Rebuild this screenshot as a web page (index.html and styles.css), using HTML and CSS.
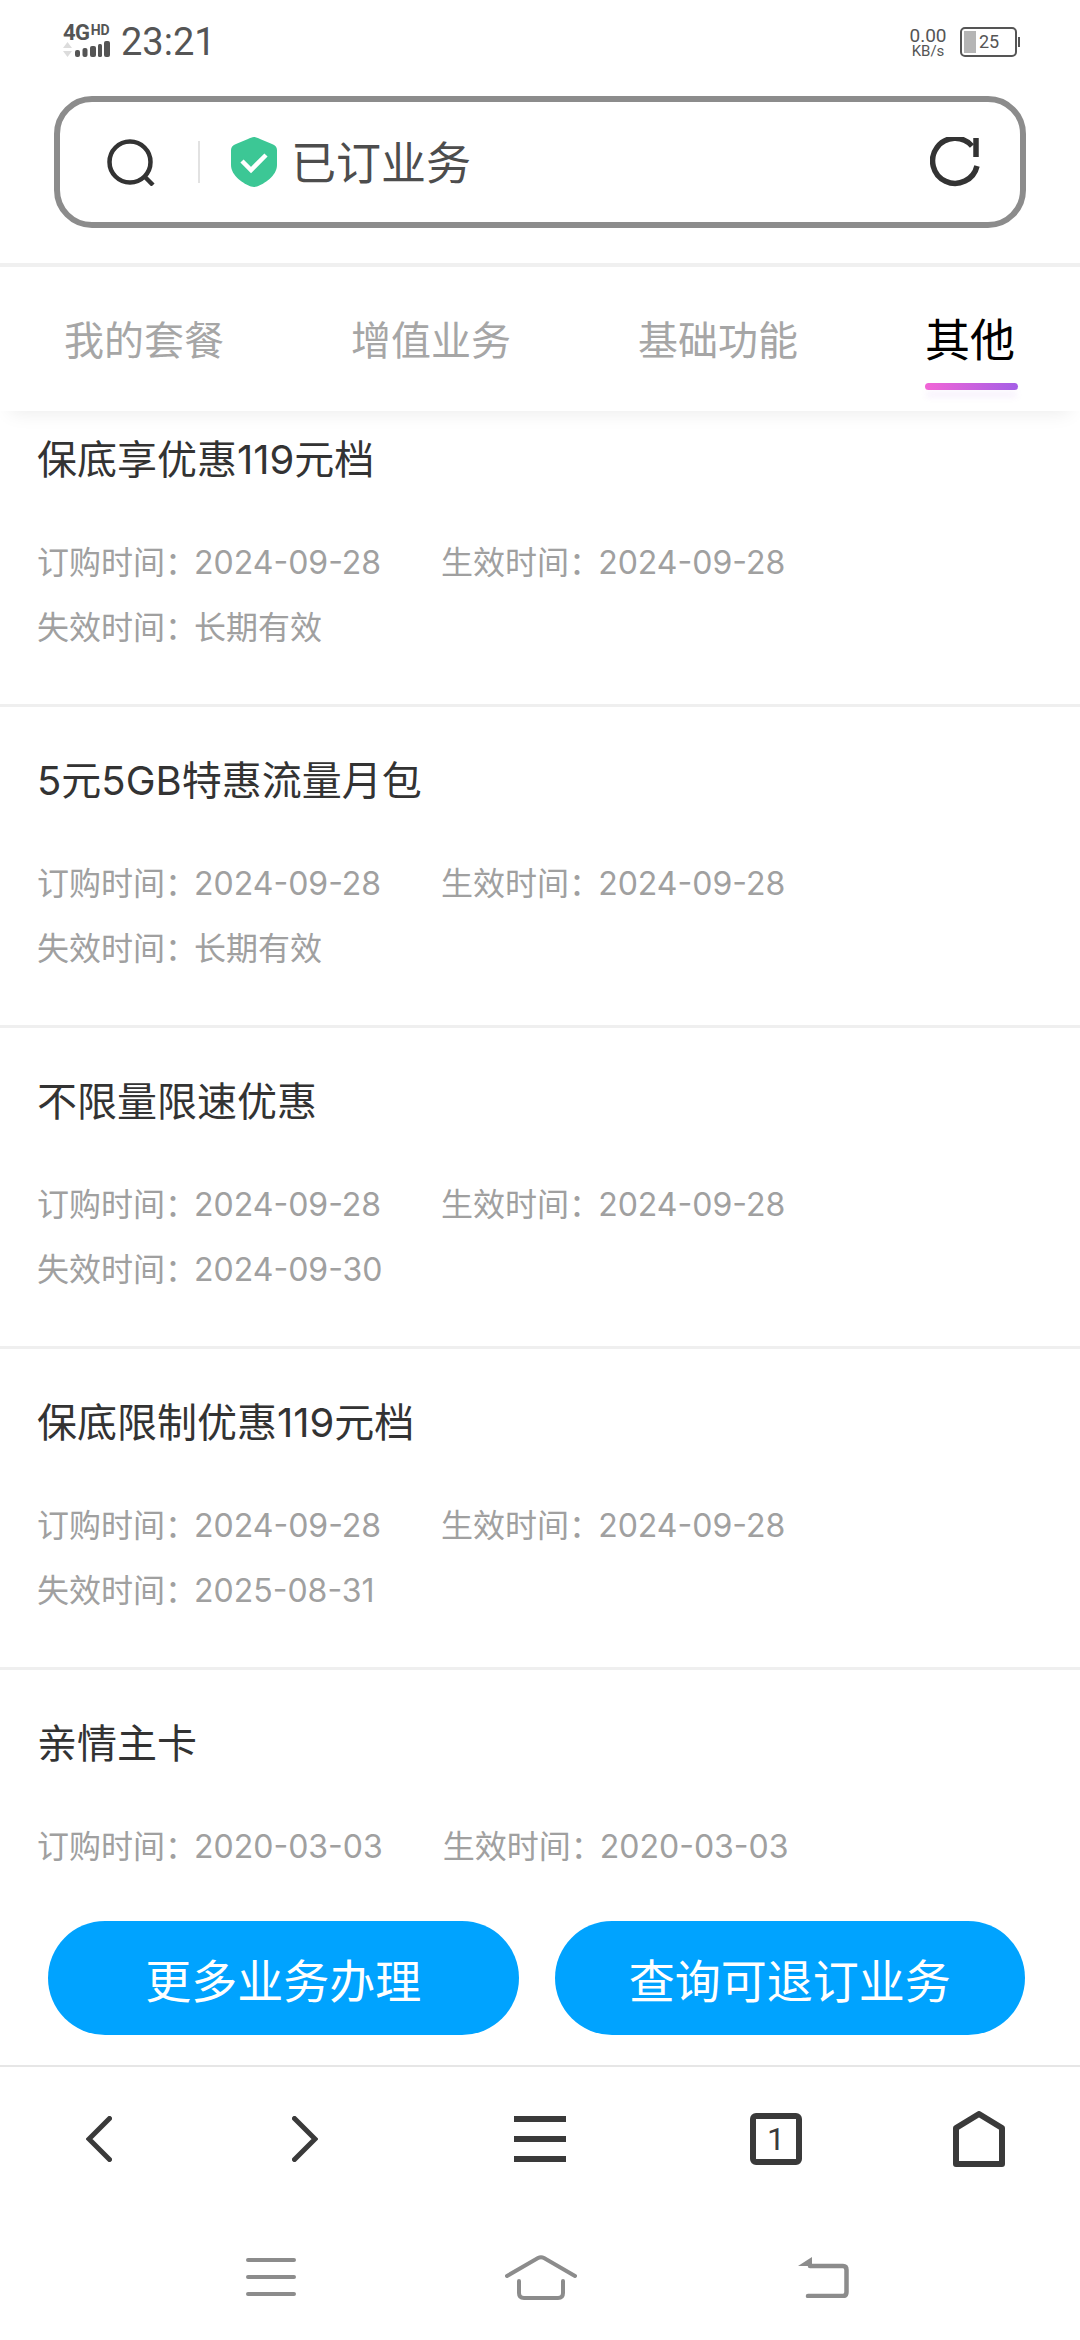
FILE: index.html
```html
<!doctype html>
<html lang="zh-CN">
<head>
    <meta charset="UTF-8">
    <meta name="viewport" content="width=device-width, initial-scale=1.0">
    <title>已订业务</title>
    <link rel="stylesheet" href="styles.css">
</head>
<body>
<div class="page">
    <div class="status-bar">
        <div class="signal">
            <div class="signal-top"><span class="net">4G</span><span class="hd">HD</span></div>
            <div class="signal-bottom">
                <svg class="arrows" width="9" height="15" viewBox="0 0 9 15"><path d="M4.5 0L9 6H0Z M0 9H9L4.5 15Z" fill="#dcdcdc"/></svg>
                <svg class="bars" width="35" height="16" viewBox="0 0 35 16" fill="#555">
                    <rect x="0" y="9" width="5" height="7" rx="2"/>
                    <rect x="7.5" y="7" width="5" height="9" rx="2"/>
                    <rect x="15" y="5" width="6" height="11" rx="2"/>
                    <rect x="23" y="3" width="4" height="13" rx="1.5"/>
                    <rect x="29" y="0" width="6" height="16" rx="2"/>
                </svg>
            </div>
        </div>
        <span class="time">23:21</span>
        <div class="speed"><span class="speed-num">0.00</span><span class="speed-unit">KB/s</span></div>
        <div class="battery"><div class="battery-fill"></div><span class="battery-num">25</span></div>
        <div class="battery-tip"></div>
    </div>

    <div class="search-bar">
        <svg class="icon-search" width="48" height="47" viewBox="0 0 48 47" fill="none" stroke="#333" stroke-width="4.5">
            <circle cx="23" cy="23" r="20.5"/>
            <path d="M38 38L46 46"/>
        </svg>
        <div class="search-line"></div>
        <svg class="icon-shield" width="46" height="50" viewBox="0 0 46 50">
            <path d="M23 0C25 0 27 1 29 2L41 7C44 8 46 10 46 13V28C46 39 33 47 26 49.500C24 50 22 50 20 49.500C13 47 0 39 0 28V13C0 10 2 8 5 7L17 2C19 1 21 0 23 0Z" fill="#3cc795"/>
            <path d="M11 24L20 33L35 18" fill="none" stroke="#fff" stroke-width="4.500"/>
        </svg>
        <span class="search-text">已订业务</span>
        <svg class="icon-refresh" width="50" height="50" viewBox="0 0 50 50" fill="none" stroke="#333" stroke-width="5.500">
            <path d="M47 29A22.500 22.500 0 1 1 42 9"/>
            <path d="M46 1V20"/>
        </svg>
    </div>

    <div class="tabs">
        <span class="tab">我的套餐</span>
        <span class="tab">增值业务</span>
        <span class="tab">基础功能</span>
        <span class="tab active">其他</span>
    </div>

    <div class="list-wrap">
        <div class="list">
            <div class="item">
                <div class="item-title">保底享优惠119元档</div>
                <div class="meta"><span class="meta-col">订购时间：<span class="date">2024-09-28</span></span><span class="meta-col">生效时间：<span class="date">2024-09-28</span></span></div>
                <div class="meta"><span class="meta-col">失效时间：<span class="date">长期有效</span></span></div>
            </div>
            <div class="item">
                <div class="item-title">5元5GB特惠流量月包</div>
                <div class="meta"><span class="meta-col">订购时间：<span class="date">2024-09-28</span></span><span class="meta-col">生效时间：<span class="date">2024-09-28</span></span></div>
                <div class="meta"><span class="meta-col">失效时间：<span class="date">长期有效</span></span></div>
            </div>
            <div class="item">
                <div class="item-title">不限量限速优惠</div>
                <div class="meta"><span class="meta-col">订购时间：<span class="date">2024-09-28</span></span><span class="meta-col">生效时间：<span class="date">2024-09-28</span></span></div>
                <div class="meta"><span class="meta-col">失效时间：<span class="date">2024-09-30</span></span></div>
            </div>
            <div class="item">
                <div class="item-title">保底限制优惠119元档</div>
                <div class="meta"><span class="meta-col">订购时间：<span class="date">2024-09-28</span></span><span class="meta-col">生效时间：<span class="date">2024-09-28</span></span></div>
                <div class="meta"><span class="meta-col">失效时间：<span class="date">2025-08-31</span></span></div>
            </div>
            <div class="item">
                <div class="item-title">亲情主卡</div>
                <div class="meta"><span class="meta-col">订购时间：<span class="date">2020-03-03</span></span><span class="meta-col">生效时间：<span class="date">2020-03-03</span></span></div>
            </div>
        </div>
    </div>

    <div class="actions">
        <button class="action-btn" type="button">更多业务办理</button>
        <button class="action-btn" type="button">查询可退订业务</button>
    </div>

    <div class="toolbar">
        <svg class="tool-back" width="26" height="46" viewBox="0 0 26 46" fill="none" stroke="#3a3a3a" stroke-width="5" stroke-linecap="round">
            <path d="M23.500 2.500L3 23L23.500 43.500"/>
        </svg>
        <svg class="tool-next" width="26" height="46" viewBox="0 0 26 46" fill="none" stroke="#3a3a3a" stroke-width="5" stroke-linecap="round">
            <path d="M2.500 2.500L23 23L2.500 43.500"/>
        </svg>
        <svg class="tool-menu" width="52" height="46" viewBox="0 0 52 46" fill="#3a3a3a">
            <rect width="52" height="6"/>
            <rect y="20" width="52" height="6"/>
            <rect y="40" width="52" height="6"/>
        </svg>
        <svg class="tool-tabs" width="52" height="52" viewBox="0 0 52 52">
            <rect x="3" y="3" width="46" height="46" rx="3" fill="none" stroke="#3a3a3a" stroke-width="6"/>
            <text class="tabs-count" x="26" y="37" text-anchor="middle">1</text>
        </svg>
        <svg class="tool-home" width="52" height="56" viewBox="0 0 52 56" fill="none" stroke="#3a3a3a" stroke-width="6" stroke-linejoin="round">
            <path d="M26 3L49 17V53H3V17Z"/>
        </svg>
    </div>

    <div class="sys-nav">
        <svg class="sys-menu" width="50" height="38" viewBox="0 0 50 38" stroke="#8c8c8c" stroke-width="4" stroke-linecap="round">
            <path d="M2 2H48M2 19H48M2 36H48"/>
        </svg>
        <svg class="sys-home" width="72" height="46" viewBox="0 0 72 46" fill="none" stroke="#8c8c8c" stroke-width="4" stroke-linecap="round">
            <path d="M2 22L33 4Q36 2.500 39 4L70 22"/>
            <path d="M14 27V39Q14 44 19 44H53Q58 44 58 39V27"/>
        </svg>
        <svg class="sys-back" width="51" height="41" viewBox="0 0 51 41">
            <path d="M14 0V9H0Z" fill="#8c8c8c"/>
            <path d="M12 9H45Q48.500 9 48.500 13V35Q48.500 39 45 39H10" fill="none" stroke="#8c8c8c" stroke-width="4.500" stroke-linecap="round"/>
        </svg>
    </div>
</div>
</body>
</html>
```
FILE: styles.css
```css
* {
    box-sizing: border-box;
}

body {
    margin: 0;
    background-color: #ffffff;
    font-family: Inter, "Noto Sans CJK SC", sans-serif;
    color: #333333;
}

.page {
    width: 1080px;
    height: 2340px;
    display: flex;
    flex-direction: column;
    overflow: hidden;
}

/* status bar */
.status-bar {
    height: 96px;
    padding: 25px 0 0 63px;
    display: flex;
    align-items: flex-start;
    font-family: Roboto, sans-serif;
    color: #555555;
}

.signal {
    width: 47px;
    height: 32px;
}

.signal-top {
    height: 15px;
    display: flex;
    align-items: flex-start;
    font-weight: 700;
    line-height: 15px;
}

.net {
    font-size: 22px;
    letter-spacing: -0.5px;
}

.hd {
    font-size: 14px;
    line-height: 11px;
    margin-left: 1px;
}

.signal-bottom {
    display: flex;
    align-items: flex-end;
    justify-content: space-between;
    margin-top: 1px;
}

.time {
    margin-left: 11px;
    font-size: 38px;
    line-height: 34px;
}

.speed {
    margin-left: auto;
    width: 38px;
    display: flex;
    flex-direction: column;
    align-items: center;
    margin-top: 2px;
}

.speed-num {
    font-size: 19px;
    line-height: 17px;
}

.speed-unit {
    font-size: 15px;
    line-height: 14px;
}

.battery {
    margin-left: 13px;
    width: 57px;
    height: 30px;
    margin-top: 2px;
    border: 2px solid #555555;
    border-radius: 5px;
    display: flex;
    align-items: center;
    padding: 2px;
}

.battery-fill {
    width: 12px;
    height: 100%;
    background-color: #b5b5b5;
}

.battery-num {
    margin-left: 3px;
    font-size: 18px;
    line-height: 20px;
}

.battery-tip {
    width: 2px;
    height: 10px;
    margin: 12px 60px 0 1px;
    background-color: #555555;
}

/* search bar */
.search-bar {
    height: 132px;
    margin: 0 54px;
    border: 6px solid #8c8c8c;
    border-radius: 38px;
    display: flex;
    align-items: center;
    padding: 0 40px 0 47px;
}

.search-line {
    width: 2px;
    height: 42px;
    margin: 0 31px 0 43px;
    background-color: #e2e2e2;
}

.search-text {
    margin: 4px 0 0 14px;
    font-size: 45px;
    line-height: 60px;
    color: #4d4d4d;
}

.icon-refresh {
    margin-left: auto;
}

/* tabs */
.tabs {
    position: relative;
    z-index: 2;
    height: 148px;
    margin-top: 35px;
    padding: 44px 0 0 64px;
    display: flex;
    gap: 127px;
    align-items: flex-start;
    background-color: #ffffff;
    border-top: 4px solid #f0f0f0;
    box-shadow: 0 12px 18px -10px rgba(0, 0, 0, 0.08);
}

.tab {
    position: relative;
    font-size: 40px;
    line-height: 60px;
    color: #a6a6a6;
}

.tab.active {
    font-size: 45px;
    color: #000000;
}

.tab.active::after {
    content: "";
    position: absolute;
    left: 0;
    top: 72px;
    width: 93px;
    height: 7px;
    border-radius: 4px;
    background: linear-gradient(90deg, #f265d6, #a45fe6);
    box-shadow: 0 8px 6px -1px rgba(170, 100, 230, 0.1);
}

/* business list */
.list-wrap {
    flex: 1;
    min-height: 0;
    overflow: hidden;
}

.list {
    margin-top: -25px;
}

.item {
    height: 321px;
    padding: 44px 37px 0;
    border-bottom: 3px solid #efefef;
}

.item-title {
    font-size: 40px;
    line-height: 60px;
    margin-bottom: 40px;
    color: #333333;
}

.meta {
    display: flex;
    gap: 60px;
    font-size: 32px;
    line-height: 65px;
    color: #a0a0a0;
}

.date {
    margin-left: -3px;
}

/* bottom buttons */
.actions {
    flex: none;
    height: 187px;
    padding: 41px 55px 0 48px;
    display: flex;
    gap: 36px;
    align-items: flex-start;
    border-bottom: 2px solid #e6e6e6;
}

.action-btn {
    flex: 1;
    height: 114px;
    border: none;
    border-radius: 57px;
    padding: 0;
    background-color: #00a3ff;
    color: #ffffff;
    font-family: inherit;
    font-size: 46px;
}

/* browser toolbar */
.toolbar {
    flex: none;
    height: 144px;
    display: flex;
    align-items: center;
    padding-left: 86px;
}

.tool-next {
    margin-left: 180px;
}

.tool-menu {
    margin-left: 196px;
}

.tool-tabs {
    margin-left: 184px;
}

.tool-home {
    margin-left: 151px;
}

.tabs-count {
    font-family: Roboto, sans-serif;
    font-size: 32px;
    fill: #3a3a3a;
}

/* system navigation */
.sys-nav {
    flex: none;
    height: 129px;
    display: flex;
    align-items: center;
    padding: 3px 0 0 246px;
}

.sys-home {
    margin-left: 209px;
}

.sys-back {
    margin-left: 221px;
}
```
